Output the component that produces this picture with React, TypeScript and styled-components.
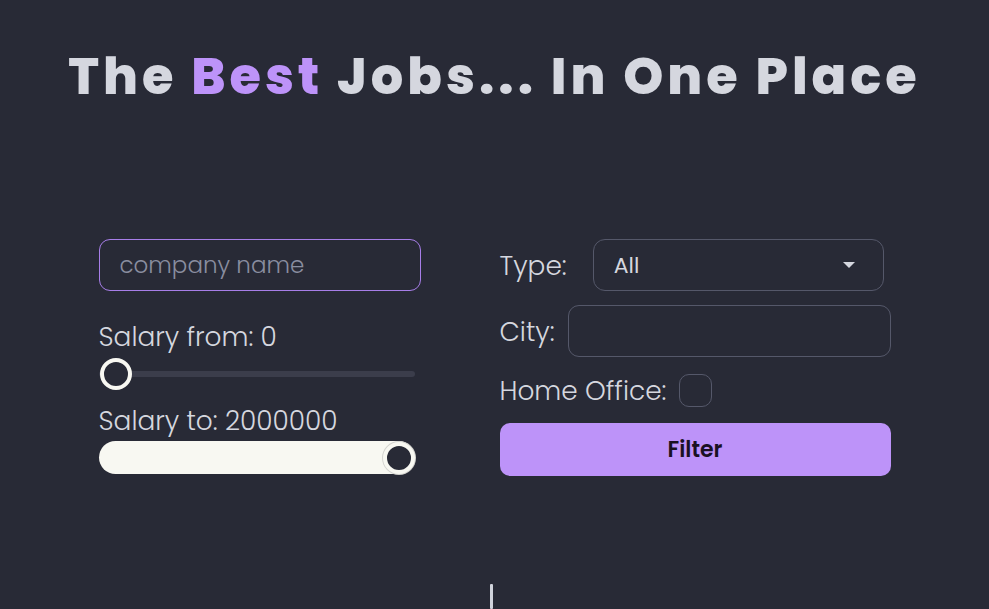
import styled, { createGlobalStyle } from 'styled-components';

const GlobalStyle = createGlobalStyle`
  html, body {
    margin: 0;
    padding: 0;
    background: #282a36;
  }
  body {
    font-family: Poppins, "Open Sans", sans-serif;
    color: #d5d7df;
    overflow: hidden;
  }
`;

const Page = styled.main`
  width: 989px;
  height: 609px;
  display: flex;
  flex-direction: column;
  align-items: center;
  background: #282a36;
`;

const Title = styled.h1`
  margin: 46px 0 0;
  font-size: 51px;
  font-weight: 800;
  letter-spacing: 4px;
  line-height: 60px;
  color: #d5d7df;
  white-space: nowrap;
  span {
    color: #bd93f9;
  }
`;

const Form = styled.form`
  margin-top: 133px;
  width: 792px;
  display: grid;
  grid-template-columns: 322px 391px;
  justify-content: space-between;
`;

const Column = styled.div`
  display: flex;
  flex-direction: column;
`;

const TextInput = styled.input<{ accent?: boolean }>`
  box-sizing: border-box;
  height: 52px;
  width: 100%;
  min-width: 0;
  border-radius: 11px;
  border: 1px solid ${p => (p.accent ? '#a77ee8' : '#55586a')};
  background: transparent;
  padding: 0 20px;
  font-family: inherit;
  font-size: 23px;
  font-weight: 300;
  color: #d5d7df;
  outline: none;
  &::placeholder {
    color: #8a8ea0;
  }
`;

const SliderLabel = styled.div<{ top: number }>`
  margin-top: ${p => p.top}px;
  font-size: 26.4px;
  font-weight: 300;
  line-height: 36px;
`;

const Slider = styled.div<{ top: number }>`
  position: relative;
  margin-top: ${p => p.top}px;
  width: 316px;
  height: 33px;
  display: flex;
  align-items: center;
`;

const Track = styled.div<{ thick?: boolean }>`
  width: 100%;
  height: ${p => (p.thick ? 33 : 6)}px;
  border-radius: 17px;
  background: ${p => (p.thick ? '#f8f8f2' : '#3b3d4b')};
`;

const Thumb = styled.div<{ right?: boolean }>`
  position: absolute;
  top: 50%;
  ${p => (p.right ? 'right: 0px;' : 'left: 1px;')}
  transform: translateY(-50%);
  box-sizing: border-box;
  width: 32px;
  height: 32px;
  border-radius: 50%;
  border: 4px solid #f8f8f2;
  background: #282a36;
  box-shadow: ${p => (p.right ? '0 0 0 1px #d4d4d0' : 'none')};
`;

const Row = styled.div<{ gap: number; top?: number }>`
  display: flex;
  align-items: center;
  gap: ${p => p.gap}px;
  margin-top: ${p => p.top ?? 0}px;
`;

const Label = styled.label`
  font-size: 26.4px;
  font-weight: 300;
  line-height: 33px;
  white-space: nowrap;
`;

const Select = styled.div`
  box-sizing: border-box;
  height: 52px;
  flex: 0 0 291px;
  border-radius: 12px;
  border: 1px solid #55586a;
  display: flex;
  align-items: center;
  justify-content: space-between;
  padding: 0 28px 0 20px;
  font-size: 22px;
  font-weight: 400;
  color: #d5d7df;
`;

const Caret = styled.span`
  width: 0;
  height: 0;
  border-left: 6px solid transparent;
  border-right: 6px solid transparent;
  border-top: 6px solid #d5d7df;
`;

const Checkbox = styled.span`
  box-sizing: border-box;
  width: 33px;
  height: 33px;
  flex: 0 0 33px;
  border-radius: 10px;
  border: 1px solid #55586a;
`;

const Button = styled.button`
  margin-top: 16px;
  height: 53px;
  width: 100%;
  border: none;
  border-radius: 10px;
  background: #bd93f9;
  font-family: inherit;
  font-size: 22px;
  font-weight: 600;
  color: #1a1022;
`;

const Cursor = styled.div`
  margin-top: 108px;
  margin-left: -6px;
  width: 3px;
  height: 26px;
  background: #d0d3dc;
  border-radius: 1px;
`;

export default function App() {
  return (
    <>
      <GlobalStyle />
      <Page>
        <Title>
          The <span>Best</span> Jobs... In One Place
        </Title>
        <Form onSubmit={e => e.preventDefault()}>
          <Column>
            <TextInput accent placeholder="company name" />
            <SliderLabel top={28}>Salary from: 0</SliderLabel>
            <Slider top={2}>
              <Track />
              <Thumb />
            </Slider>
            <SliderLabel top={13}>Salary to: 2000000</SliderLabel>
            <Slider top={2}>
              <Track thick />
              <Thumb right />
            </Slider>
          </Column>
          <Column>
            <Row gap={26}>
              <Label>Type:</Label>
              <Select>
                <span>All</span>
                <Caret />
              </Select>
            </Row>
            <Row gap={13} top={14}>
              <Label>City:</Label>
              <TextInput />
            </Row>
            <Row gap={13} top={17}>
              <Label>Home Office:</Label>
              <Checkbox />
            </Row>
            <Button type="submit">Filter</Button>
          </Column>
        </Form>
        <Cursor />
      </Page>
    </>
  );
}
